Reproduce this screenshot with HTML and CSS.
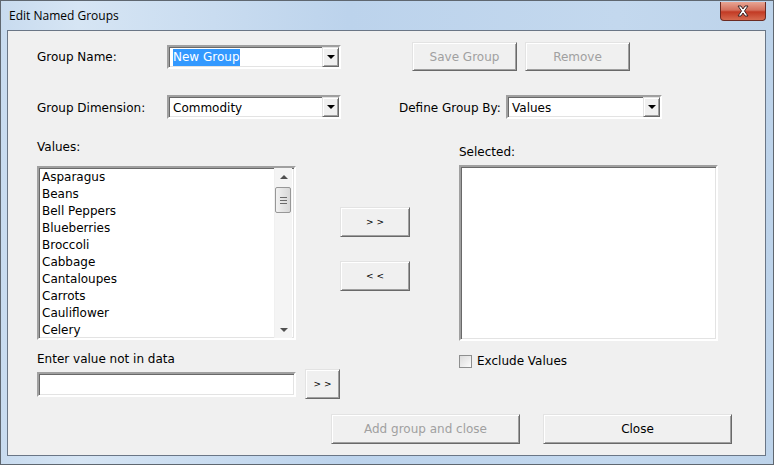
FILE: index.html
```html
<!DOCTYPE html>
<html lang="en">
<head>
    <meta charset="UTF-8">
    <title>Edit Named Groups</title>
    <link rel="stylesheet" href="styles.css">
</head>
<body>

    <div class="window">
        <div class="titlebar">
            <span class="title">Edit Named Groups</span>
            <span class="close-btn">
                <svg width="16" height="12" viewBox="0 0 16 12">
                    <path d="M3 1 L6 1 L8 4 L10 1 L13 1 L9.5 6 L13 11 L10 11 L8 8 L6 11 L3 11 L6.5 6 Z" fill="#fff" stroke="#3b2424" stroke-width="1"/>
                </svg>
            </span>
        </div>

        <div class="client">
            <!-- Group name row -->
            <div class="row row-name">
                <span class="lbl lbl-first">Group Name:</span>
                <div class="combo combo-left">
                    <span class="combo-text"><span class="sel">New Group</span></span>
                    <span class="drop"><i class="tri-down"></i></span>
                </div>
                <button class="btn btn-top btn-save" disabled>Save Group</button>
                <button class="btn btn-top btn-remove" disabled>Remove</button>
            </div>

            <!-- Dimension row -->
            <div class="row row-dim">
                <span class="lbl lbl-first">Group Dimension:</span>
                <div class="combo combo-left">
                    <span class="combo-text">Commodity</span>
                    <span class="drop"><i class="tri-down"></i></span>
                </div>
                <span class="lbl lbl-define">Define Group By:</span>
                <div class="combo combo-define">
                    <span class="combo-text">Values</span>
                    <span class="drop"><i class="tri-down"></i></span>
                </div>
            </div>

            <div class="main">
                <!-- Values list -->
                <div class="col col-values">
                    <span class="lbl lbl-values">Values:</span>
                    <div class="listbox list-values">
                        <ul class="items">
                            <li>Asparagus</li>
                            <li>Beans</li>
                            <li>Bell Peppers</li>
                            <li>Blueberries</li>
                            <li>Broccoli</li>
                            <li>Cabbage</li>
                            <li>Cantaloupes</li>
                            <li>Carrots</li>
                            <li>Cauliflower</li>
                            <li>Celery</li>
                        </ul>
                        <div class="scrollbar">
                            <span class="sb-arrow"><i class="tri-up-sm"></i></span>
                            <span class="sb-thumb"><i></i><i></i><i></i></span>
                            <span class="sb-track"></span>
                            <span class="sb-arrow"><i class="tri-down-sm"></i></span>
                        </div>
                    </div>
                    <span class="lbl lbl-enter">Enter value not in data</span>
                    <div class="enter-row">
                        <div class="textbox"></div>
                        <button class="btn btn-small">&gt; &gt;</button>
                    </div>
                </div>

                <!-- Move buttons -->
                <div class="col col-move">
                    <button class="btn btn-move btn-add">&gt; &gt;</button>
                    <button class="btn btn-move btn-back">&lt; &lt;</button>
                </div>

                <!-- Selected list -->
                <div class="col col-selected">
                    <span class="lbl lbl-selected">Selected:</span>
                    <div class="listbox list-selected"></div>
                    <div class="check-row">
                        <span class="checkbox"></span>
                        <span class="lbl">Exclude Values</span>
                    </div>
                </div>
            </div>

            <div class="footer">
                <button class="btn btn-wide" disabled>Add group and close</button>
                <button class="btn btn-wide btn-close">Close</button>
            </div>
        </div>
    </div>

</body>
</html>
```

FILE: styles.css
```css
body {
    margin: 0;
    font-family: 'DejaVu Sans', sans-serif;
    font-size: 12px;
    color: #000;
    background: #fff;
}
.window {
    width: 774px;
    height: 465px;
    box-sizing: border-box;
    border: 1px solid #5f6770;
    background: linear-gradient(to right, #c8dbef, #d6e5f4 10%, #bcd3ec 45%, #c3d8ee 80%, #bdd3ea);
    padding: 0 7px 8px 6px;
    display: flex;
    flex-direction: column;
}
.titlebar {
    height: 29px;
    display: flex;
    align-items: flex-start;
}
.title {
    font-family: 'Open Sans', sans-serif;
    font-size: 12px;
    margin: 6px 0 0 2px;
    color: #000;
}
.close-btn {
    margin-left: auto;
    margin-top: 1px;
    width: 46px;
    height: 19px;
    box-sizing: border-box;
    border: 1px solid #6b2a22;
    border-top: none;
    border-radius: 0 0 4px 4px;
    background: linear-gradient(to bottom, #e8a593, #d4705d 45%, #c23a24 55%, #d66a4f);
    display: flex;
    align-items: center;
    justify-content: center;
}
.client {
    flex: 1;
    border: 1px solid #6a7686;
    background: #f0f0f0;
    padding: 11px 0 0 29px;
}
.row {
    display: flex;
    align-items: center;
}
.row-name {
    height: 29px;
}
.row-dim {
    height: 24px;
    margin-top: 24px;
}
.row-dim .lbl {
    padding-top: 2px;
}
.row-dim .combo-text {
    padding-top: 2px;
}
.lbl {
    line-height: 14px;
    white-space: nowrap;
}
.lbl-first {
    width: 130px;
}
.combo {
    height: 24px;
    box-sizing: border-box;
    background: #fff;
    border: 2px solid;
    border-color: #a0a0a0 #fff #fff #a0a0a0;
    box-shadow: inset 1px 1px 0 #696969, inset -1px -1px 0 #e3e3e3;
    display: flex;
    align-items: center;
    padding: 0 0 0 3px;
}
.combo-left {
    width: 174px;
}
.combo-define {
    width: 156px;
}
.combo-text {
    flex: 1;
    padding-left: 1px;
}
.sel {
    background: #3399ff;
    color: #fff;
    padding: 1px 0 2px;
}
.drop {
    width: 17px;
    height: 20px;
    box-sizing: border-box;
    background: #f0f0f0;
    border: 1px solid;
    border-color: #e3e3e3 #696969 #696969 #e3e3e3;
    box-shadow: inset 1px 1px 0 #fff, inset -1px -1px 0 #a0a0a0;
    display: flex;
    align-items: center;
    justify-content: center;
}
.tri-down {
    width: 0;
    height: 0;
    border-left: 4px solid transparent;
    border-right: 4px solid transparent;
    border-top: 4px solid #000;
}
.lbl-define {
    margin-left: 58px;
    width: 107px;
}
.btn {
    font-family: 'DejaVu Sans', sans-serif;
    font-size: 12px;
    color: #000;
    background: #f0f0f0;
    border: 1px solid;
    border-color: #e3e3e3 #696969 #696969 #e3e3e3;
    box-shadow: inset 1px 1px 0 #fff, inset -1px -1px 0 #a0a0a0;
    padding: 0;
    box-sizing: border-box;
}
.btn:disabled {
    color: #a0a0a0;
}
.btn-top {
    width: 105px;
    height: 29px;
}
.btn-save {
    margin-left: 71px;
}
.btn-remove {
    margin-left: 8px;
}
.main {
    display: flex;
    align-items: flex-start;
}
.col {
    display: flex;
    flex-direction: column;
}
.col-values {
    width: 259px;
}
.lbl-values {
    margin-top: 21px;
}
.listbox {
    box-sizing: border-box;
    background: #fff;
    border: 2px solid;
    border-color: #a0a0a0 #fff #fff #a0a0a0;
    box-shadow: inset 1px 1px 0 #696969, inset -1px -1px 0 #e3e3e3;
}
.list-values {
    margin-top: 12px;
    height: 174px;
    display: flex;
    padding: 0 2px 0 0;
}
.items {
    list-style: none;
    margin: 0;
    padding: 1px 0 0 3px;
    flex: 1;
}
.items li {
    height: 17px;
    line-height: 17px;
}
.scrollbar {
    width: 17px;
    display: flex;
    flex-direction: column;
    background: #f4f4f4;
    border-left: 1px solid #f0f0f0;
}
.sb-arrow {
    height: 17px;
    display: flex;
    align-items: center;
    justify-content: center;
}
.tri-up-sm {
    width: 0;
    height: 0;
    border-left: 4px solid transparent;
    border-right: 4px solid transparent;
    border-bottom: 4px solid #505050;
}
.tri-down-sm {
    width: 0;
    height: 0;
    border-left: 4px solid transparent;
    border-right: 4px solid transparent;
    border-top: 4px solid #505050;
}
.sb-thumb {
    margin: 2px 1px 0 0;
    height: 26px;
    box-sizing: border-box;
    border: 1px solid #979797;
    border-radius: 2px;
    background: linear-gradient(to right, #f2f2f2, #e4e4e4 50%, #d8d8d8);
    display: flex;
    flex-direction: column;
    align-items: center;
    justify-content: center;
    gap: 2px;
}
.sb-thumb i {
    width: 7px;
    height: 1px;
    background: #6a6a6a;
}
.sb-track {
    flex: 1;
}
.lbl-enter {
    margin-top: 12px;
}
.enter-row {
    margin-top: 3px;
    display: flex;
    align-items: center;
    width: 303px;
}
.textbox {
    width: 259px;
    height: 25px;
    box-sizing: border-box;
    background: #fff;
    border: 2px solid;
    border-color: #a0a0a0 #fff #fff #a0a0a0;
    box-shadow: inset 1px 1px 0 #696969, inset -1px -1px 0 #e3e3e3;
}
.btn-small {
    margin-left: 9px;
    width: 35px;
    height: 30px;
    font-size: 9px;
}
.col-move {
    margin-left: 44px;
    width: 70px;
}
.btn-move {
    width: 70px;
    height: 30px;
    font-size: 9px;
}
.btn-add {
    margin-top: 88px;
}
.btn-back {
    margin-top: 24px;
}
.col-selected {
    margin-left: 49px;
    width: 259px;
}
.lbl-selected {
    margin-top: 26px;
}
.list-selected {
    margin-top: 6px;
    height: 176px;
}
.check-row {
    margin-top: 13px;
    display: flex;
    align-items: center;
    gap: 5px;
}
.checkbox {
    width: 13px;
    height: 13px;
    box-sizing: border-box;
    border: 1px solid #8e8f8f;
    background: linear-gradient(135deg, #dcdcdc, #fbfbfb);
}
.footer {
    display: flex;
    margin-top: 15px;
    padding-left: 294px;
}
.btn-wide {
    width: 189px;
    height: 30px;
}
.btn-close {
    margin-left: 23px;
}
```
